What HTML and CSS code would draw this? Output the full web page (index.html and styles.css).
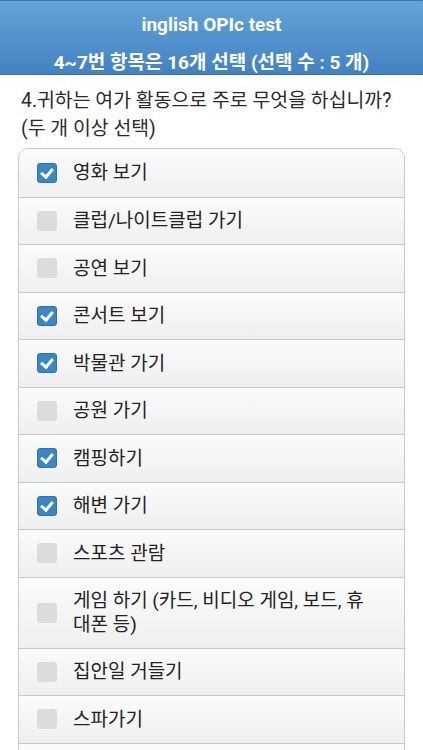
FILE: index.html
```html
<!DOCTYPE html>
<html lang="ko">
  <head>
    <meta charset="UTF-8" />
    <meta name="viewport" content="width=device-width, initial-scale=1.0" />
    <title>inglish OPIc test</title>
    <link rel="stylesheet" href="styles.css">
  </head>
  <body>
    <div class="header">
      <h1 class="title">inglish OPIc test</h1>
      <p class="sub">4~7번 항목은 16개 선택 (선택 수 : 5 개)</p>
    </div>
    <div class="content">
      <p class="question">4.귀하는 여가 활동으로 주로 무엇을 하십니까?<br />(두 개 이상 선택)</p>
      <ul class="choices">
        <li class="on"><span class="box"></span><span class="label">영화 보기</span></li>
        <li><span class="box"></span><span class="label">클럽/나이트클럽 가기</span></li>
        <li><span class="box"></span><span class="label">공연 보기</span></li>
        <li class="on"><span class="box"></span><span class="label">콘서트 보기</span></li>
        <li class="on"><span class="box"></span><span class="label">박물관 가기</span></li>
        <li><span class="box"></span><span class="label">공원 가기</span></li>
        <li class="on"><span class="box"></span><span class="label">캠핑하기</span></li>
        <li class="on"><span class="box"></span><span class="label">해변 가기</span></li>
        <li><span class="box"></span><span class="label">스포츠 관람</span></li>
        <li><span class="box"></span><span class="label">게임 하기 (카드, 비디오 게임, 보드, 휴대폰 등)</span></li>
        <li><span class="box"></span><span class="label">집안일 거들기</span></li>
        <li><span class="box"></span><span class="label">스파가기</span></li>
        <li><span class="box"></span></li>
      </ul>
    </div>
  </body>
</html>
```

FILE: styles.css
```css
* {
  margin: 0;
  padding: 0;
  box-sizing: border-box;
}
body {
  font-family: Roboto, "Noto Sans CJK KR", sans-serif;
  background: #fff;
  color: #222;
}
ul {
  list-style: none;
}
.header {
  height: 75px;
  border-top: 1px solid #3f74ab;
  border-bottom: 1px solid #3a70a8;
  background: linear-gradient(#64a4d8, #4382c2);
  color: #fff;
  text-align: center;
  padding-top: 11px;
}
.title {
  font-size: 19px;
  font-weight: bold;
  line-height: 26px;
}
.sub {
  font-size: 19px;
  font-weight: bold;
  line-height: 26px;
  margin-top: 12px;
}
.content {
  padding: 12px 18px 0 18px;
}
.question {
  font-size: 19.4px;
  line-height: 28px;
  color: #2a2a2a;
  padding-left: 3px;
}
.choices {
  margin-top: 5px;
  border: 1px solid #c8c8c8;
  border-radius: 10px;
  overflow: hidden;
}
.choices li {
  display: flex;
  align-items: center;
  gap: 16px;
  min-height: 47.5px;
  padding: 11.5px 29px 11.5px 18px;
  background: linear-gradient(#fbfbfb, #efefef);
  border-top: 1px solid #c8c8c8;
}
.choices li:first-child {
  border-top: none;
}
.box {
  flex: none;
  width: 20px;
  height: 20px;
  border-radius: 3px;
  background: #dcdcdc;
  position: relative;
}
.on .box {
  background: #3a87c4;
  border: 1px solid #2f74ad;
}
.on .box::after {
  content: "";
  position: absolute;
  left: 5px;
  top: 2px;
  width: 5px;
  height: 9px;
  border: solid #fff;
  border-width: 0 3px 3px 0;
  transform: rotate(40deg);
}
.label {
  font-size: 19px;
  line-height: 23.5px;
  color: #222;
}
```
